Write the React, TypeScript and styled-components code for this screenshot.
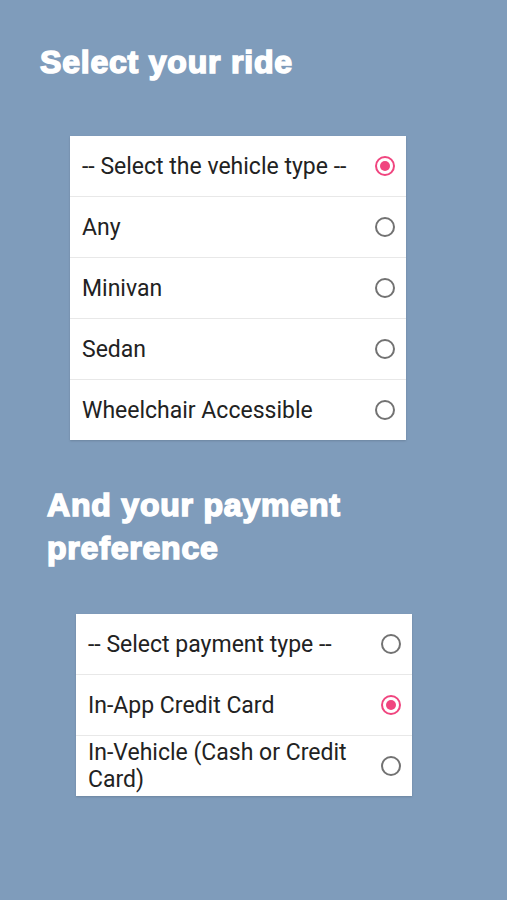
import styled, { createGlobalStyle } from "styled-components";

const GlobalStyle = createGlobalStyle`
  html, body {
    margin: 0;
    padding: 0;
    background: #7f9cbb;
  }
`;

const Page = styled.div`
  width: 507px;
  min-height: 900px;
  background: #7f9cbb;
  display: flex;
  flex-direction: column;
  font-family: Roboto, "Liberation Sans", sans-serif;
`;

const Heading = styled.h1<{ $left: number; $top: number }>`
  margin: ${(p) => p.$top}px 0 0 ${(p) => p.$left}px;
  font-family: "Liberation Sans", Arial, sans-serif;
  font-weight: 700;
  font-size: 32px;
  line-height: 43px;
  color: #ffffff;
  -webkit-text-stroke: 1.6px #ffffff;
  letter-spacing: 0.8px;
`;

const Card = styled.div<{ $left: number; $top: number }>`
  margin: ${(p) => p.$top}px 0 0 ${(p) => p.$left}px;
  width: 336px;
  background: #ffffff;
  box-shadow: 0 1px 2px rgba(0, 0, 0, 0.15);
`;

const Row = styled.label`
  display: flex;
  align-items: center;
  justify-content: space-between;
  height: 61px;
  box-sizing: border-box;
  padding: 0 11px 0 12px;
  border-top: 1px solid #e8e8e8;
  &:first-child {
    border-top: none;
    height: 60px;
  }
`;

const Label = styled.span`
  font-size: 23px;
  line-height: 27px;
  color: #222222;
  max-width: 275px;
`;

const Radio = styled.span<{ $checked: boolean }>`
  width: 20px;
  height: 20px;
  box-sizing: border-box;
  border-radius: 50%;
  border: 2px solid ${(p) => (p.$checked ? "#f0457f" : "#727272")};
  display: flex;
  align-items: center;
  justify-content: center;
  flex-shrink: 0;
  &::after {
    content: "";
    width: 10px;
    height: 10px;
    border-radius: 50%;
    background: #f0457f;
    display: ${(p) => (p.$checked ? "block" : "none")};
  }
`;

const vehicles = [
  "-- Select the vehicle type --",
  "Any",
  "Minivan",
  "Sedan",
  "Wheelchair Accessible",
];

const payments = [
  "-- Select payment type --",
  "In-App Credit Card",
  "In-Vehicle (Cash or Credit Card)",
];

export default function App() {
  return (
    <>
      <GlobalStyle />
      <Page>
        <Heading $left={40} $top={41}>Select your ride</Heading>
        <Card $left={70} $top={52}>
          {vehicles.map((v, i) => (
            <Row key={v}>
              <Label>{v}</Label>
              <Radio $checked={i === 0} />
            </Row>
          ))}
        </Card>
        <Heading $left={47} $top={44}>
          And your payment
          <br />
          preference
        </Heading>
        <Card $left={76} $top={44}>
          {payments.map((v, i) => (
            <Row key={v}>
              <Label>{v}</Label>
              <Radio $checked={i === 1} />
            </Row>
          ))}
        </Card>
      </Page>
    </>
  );
}
